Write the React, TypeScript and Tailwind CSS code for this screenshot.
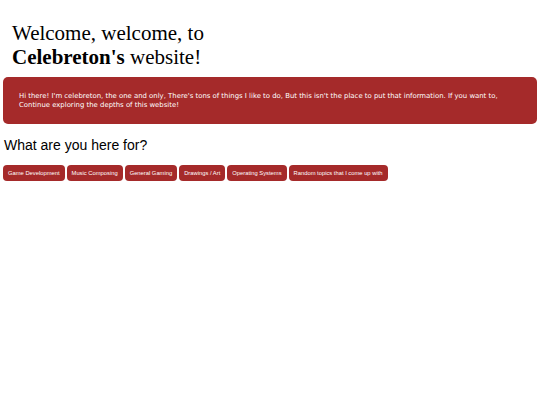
const topics = [
  'Game Development',
  'Music Composing',
  'General Gaming',
  'Drawings / Art',
  'Operating Systems',
  'Random topics that I come up with',
]

export default function App() {
  return (
    <div className="min-h-[405px] w-[540px] bg-white text-black">
      <div className="px-3 pt-[21px] pb-[8px] font-['Liberation_Serif',serif] text-[21px] leading-[24px]">
        <div>Welcome, welcome, to</div>
        <div>
          <b>Celebreton's</b> website!
        </div>
      </div>
      <div className="mx-[3px] rounded-[5px] bg-[#a52a2a] px-4 py-[15px] font-['DejaVu_Sans',sans-serif] text-[6.9px] leading-[8.5px] text-white">
        Hi there! I'm celebreton, the one and only, There's tons of things I like to do, But this isn't the place to put that information. If you want to,
        <br />
        Continue exploring the depths of this website!
      </div>
      <div className="px-[4px] pt-[13px] font-['Liberation_Sans',sans-serif] text-[14px] leading-[17px]">
        What are you here for?
      </div>
      <div className="flex gap-[2px] px-[3px] pt-[11px] font-['Liberation_Sans',sans-serif]">
        {topics.map((t) => (
          <button
            key={t}
            className="h-4 rounded-[4px] bg-[#a52a2a] px-[5px] text-[5.8px] leading-[16px] text-white"
          >
            {t}
          </button>
        ))}
      </div>
    </div>
  )
}
